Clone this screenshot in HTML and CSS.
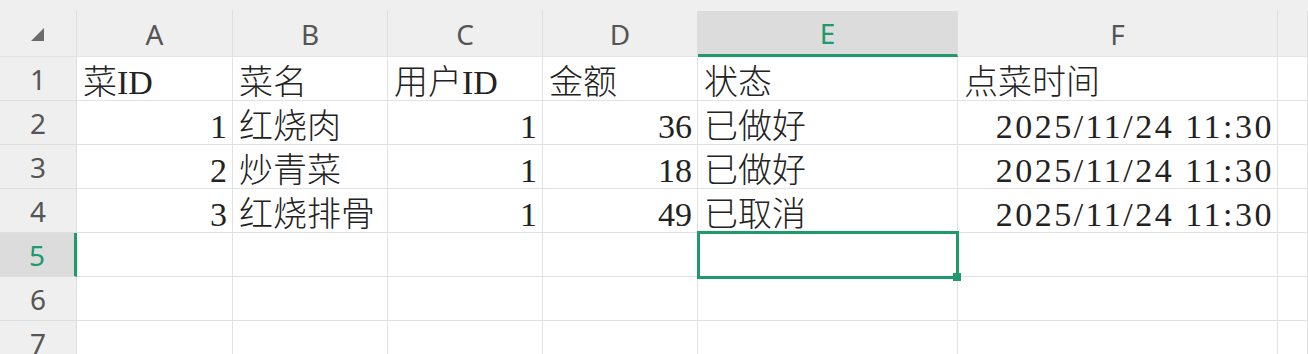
FILE: index.html
```html
<!DOCTYPE html>
<html lang="zh-CN">
<head>
  <meta charset="UTF-8">
  <meta name="viewport" content="width=device-width, initial-scale=1.0">
  <title>点菜记录</title>
  <link rel="stylesheet" href="styles.css">
</head>
<body>
  <div class="topbar"></div>

  <div class="sheet">
    <!-- column headers -->
    <div class="corner"><span class="tri"></span></div>
    <div class="col-head">A</div>
    <div class="col-head">B</div>
    <div class="col-head">C</div>
    <div class="col-head">D</div>
    <div class="col-head active">E</div>
    <div class="col-head">F</div>
    <div class="col-head"></div>

    <!-- row 1 -->
    <div class="row-head">1</div>
    <div class="cell">菜ID</div>
    <div class="cell">菜名</div>
    <div class="cell">用户ID</div>
    <div class="cell">金额</div>
    <div class="cell">状态</div>
    <div class="cell">点菜时间</div>
    <div class="cell"></div>

    <!-- row 2 -->
    <div class="row-head">2</div>
    <div class="cell num">1</div>
    <div class="cell">红烧肉</div>
    <div class="cell num">1</div>
    <div class="cell num">36</div>
    <div class="cell">已做好</div>
    <div class="cell num date">2025/11/24 11:30</div>
    <div class="cell"></div>

    <!-- row 3 -->
    <div class="row-head">3</div>
    <div class="cell num">2</div>
    <div class="cell">炒青菜</div>
    <div class="cell num">1</div>
    <div class="cell num">18</div>
    <div class="cell">已做好</div>
    <div class="cell num date">2025/11/24 11:30</div>
    <div class="cell"></div>

    <!-- row 4 -->
    <div class="row-head">4</div>
    <div class="cell num">3</div>
    <div class="cell">红烧排骨</div>
    <div class="cell num">1</div>
    <div class="cell num">49</div>
    <div class="cell">已取消</div>
    <div class="cell num date">2025/11/24 11:30</div>
    <div class="cell"></div>

    <!-- row 5 -->
    <div class="row-head active">5</div>
    <div class="cell"></div>
    <div class="cell"></div>
    <div class="cell"></div>
    <div class="cell"></div>
    <div class="cell selected"></div>
    <div class="cell"></div>
    <div class="cell"></div>

    <!-- row 6 -->
    <div class="row-head">6</div>
    <div class="cell"></div>
    <div class="cell"></div>
    <div class="cell"></div>
    <div class="cell"></div>
    <div class="cell"></div>
    <div class="cell"></div>
    <div class="cell"></div>

    <!-- row 7 -->
    <div class="row-head">7</div>
    <div class="cell"></div>
    <div class="cell"></div>
    <div class="cell"></div>
    <div class="cell"></div>
    <div class="cell"></div>
    <div class="cell"></div>
    <div class="cell"></div>
  </div>
</body>
</html>
```

FILE: styles.css
```css
* {
  box-sizing: border-box;
}
html, body {
  margin: 0;
  overflow: hidden;
  background: #fff;
}
.topbar {
  height: 11px;
  background: #efefef;
}
.sheet {
  display: grid;
  grid-template-columns: 77px 156px 155px 155px 155px 260px 320px 1fr;
  grid-template-rows: 46px;
  grid-auto-rows: 44px;
}
.corner,
.col-head,
.row-head {
  background: #efefef;
  color: #555;
  font-family: "Noto Sans", sans-serif;
  font-size: 28px;
  display: flex;
  align-items: center;
  justify-content: center;
}
.corner,
.col-head {
  border-right: 1px solid #dedede;
  border-bottom: 1px solid #e4e4e4;
}
.col-head.active {
  background: #dcdcdc;
  color: #1e9a6b;
  border-bottom: 3px solid #1e9a6b;
}
.tri {
  width: 0;
  height: 0;
  border-style: solid;
  border-width: 0 0 13px 13px;
  border-color: transparent transparent #6b6b6b transparent;
  margin: 2px 0 0 -1px;
}
.row-head {
  border-right: 1px solid #dedede;
  border-bottom: 1px solid #dedede;
}
.row-head.active {
  background: #dcdcdc;
  color: #1e9a6b;
  border-right: 3px solid #1e9a6b;
}
.cell {
  position: relative;
  border-right: 1px solid #e2e2e2;
  border-bottom: 1px solid #e2e2e2;
  padding: 8px 5px 0 6px;
  font-family: "Liberation Serif", "Noto Sans CJK SC", serif;
  font-size: 34px;
  font-weight: 300;
  line-height: 36px;
  color: #222;
  white-space: nowrap;
  overflow: hidden;
}
.num {
  text-align: right;
}
.date {
  letter-spacing: 2.5px;
  padding-right: 3px;
}
.cell.selected {
  overflow: visible;
  z-index: 2;
}
.cell.selected::after {
  content: "";
  position: absolute;
  left: -1px;
  top: -2px;
  right: -2px;
  bottom: -3px;
  border: 3px solid #1e9a6b;
}
.cell.selected::before {
  content: "";
  position: absolute;
  right: -4px;
  bottom: -5px;
  width: 8px;
  height: 8px;
  background: #1e9a6b;
  z-index: 1;
}
```
